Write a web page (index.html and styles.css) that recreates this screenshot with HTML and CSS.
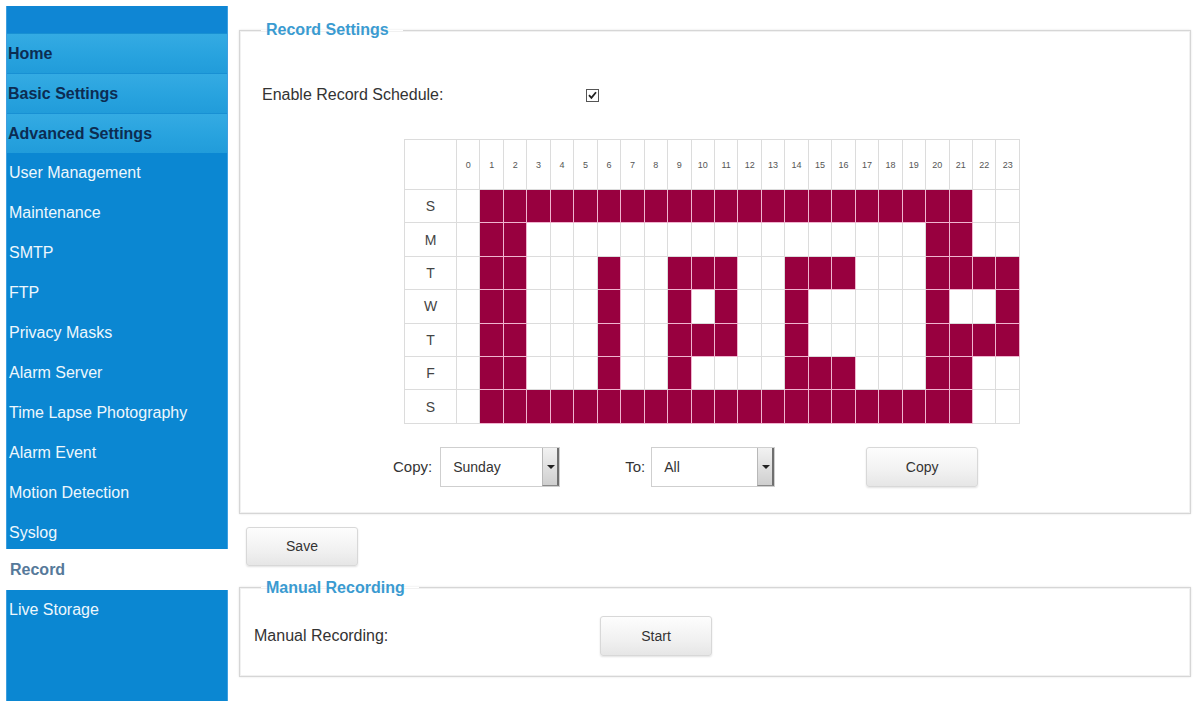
FILE: index.html
```html
<!DOCTYPE html>
<html lang="en">
<head>
  <meta charset="UTF-8" />
  <title>Record</title>
  <link rel="stylesheet" href="styles.css">
</head>
<body>
  <div class="page">
    <div class="sidebar">
      <div class="nav-block">
        <div class="nav-head"></div>
        <div class="nav-group">Home</div>
        <div class="nav-group">Basic Settings</div>
        <div class="nav-group">Advanced Settings</div>
        <div class="nav-item">User Management</div>
        <div class="nav-item">Maintenance</div>
        <div class="nav-item">SMTP</div>
        <div class="nav-item">FTP</div>
        <div class="nav-item">Privacy Masks</div>
        <div class="nav-item">Alarm Server</div>
        <div class="nav-item">Time Lapse Photography</div>
        <div class="nav-item">Alarm Event</div>
        <div class="nav-item">Motion Detection</div>
        <div class="nav-item last">Syslog</div>
      </div>
      <div class="nav-current">Record</div>
      <div class="nav-block bottom">
        <div class="nav-item">Live Storage</div>
      </div>
    </div>

    <div class="main">
      <fieldset class="box">
        <legend>Record Settings</legend>
        <div class="enable-row">
          <span class="label">Enable Record Schedule:</span>
          <span class="check">
            <svg width="13" height="13" viewBox="0 0 13 13">
              <rect x="0.5" y="0.5" width="12" height="12" fill="#fff" stroke="#555"/>
              <path d="M3 6.2 L5.4 8.8 L10 3.2" fill="none" stroke="#222" stroke-width="1.8"/>
            </svg>
          </span>
        </div>

        <table class="schedule">
          <thead>
            <tr id="hourRow"><th class="day-col"></th></tr>
          </thead>
          <tbody id="scheduleBody"></tbody>
        </table>

        <div class="copy-row">
          <span class="copy-label">Copy:</span>
          <div class="combo from"><span>Sunday</span><span class="arrow"></span></div>
          <span class="copy-label to-label">To:</span>
          <div class="combo to"><span>All</span><span class="arrow"></span></div>
          <button class="btn copy-btn">Copy</button>
        </div>
      </fieldset>

      <button class="btn save-btn">Save</button>

      <fieldset class="box manual">
        <legend>Manual Recording</legend>
        <div class="manual-row">
          <span class="label">Manual Recording:</span>
          <button class="btn">Start</button>
        </div>
      </fieldset>
    </div>
  </div>

  <script>
    // hours switched on for each day, Sunday first
    const week = [
      { day: "S", on: range(1, 21) },
      { day: "M", on: [1, 2, 20, 21] },
      { day: "T", on: [1, 2, 6, 9, 10, 11, 14, 15, 16, 20, 21, 22, 23] },
      { day: "W", on: [1, 2, 6, 9, 11, 14, 20, 23] },
      { day: "T", on: [1, 2, 6, 9, 10, 11, 14, 20, 21, 22, 23] },
      { day: "F", on: [1, 2, 6, 9, 14, 15, 16, 20, 21] },
      { day: "S", on: range(1, 21) }
    ];

    function range(a, b) {
      const list = [];
      for (let i = a; i <= b; i++) list.push(i);
      return list;
    }

    function buildSchedule() {
      const head = document.getElementById("hourRow");
      for (let h = 0; h < 24; h++) {
        const th = document.createElement("th");
        th.textContent = h;
        head.appendChild(th);
      }

      const body = document.getElementById("scheduleBody");
      week.forEach(d => {
        const tr = document.createElement("tr");
        let html = `<td class="day">${d.day}</td>`;
        for (let h = 0; h < 24; h++) {
          html += d.on.includes(h) ? '<td class="on"></td>' : '<td></td>';
        }
        tr.innerHTML = html;
        body.appendChild(tr);
      });
    }

    buildSchedule();
  </script>
</body>
</html>
```

FILE: styles.css
```css
body {
  margin: 0;
  font-family: "Liberation Sans", Arial, sans-serif;
  background: #fff;
  color: #333;
}
.page {
  display: flex;
  align-items: flex-start;
  padding: 6px 2px 0 6px;
}

/* left menu */
.sidebar {
  width: 222px;
  flex: none;
}
.nav-block {
  background: #0b87d2;
  border-left: 1px solid #3e9fe0;
  border-right: 1px solid #3e9fe0;
}
.nav-head {
  height: 27px;
  background: #0f86d4;
}
.nav-group {
  height: 39px;
  line-height: 39px;
  border-top: 1px solid #1890d3;
  padding-left: 1px;
  font-size: 16px;
  font-weight: bold;
  color: #0c2c52;
  background: linear-gradient(180deg, #34abe3 0%, #27a2de 60%, #219cda 100%);
}
.nav-group:first-of-type {
  height: 38px;
  line-height: 38px;
}
.nav-item {
  height: 40px;
  line-height: 40px;
  padding-left: 2px;
  font-size: 16px;
  color: #eef7fd;
}
.nav-item.last {
  height: 36px;
}
.nav-current {
  height: 41px;
  line-height: 41px;
  padding-left: 4px;
  font-size: 16px;
  font-weight: bold;
  color: #56799a;
}
.nav-block.bottom {
  min-height: 112px;
}

/* content */
.main {
  flex: 1;
  margin-left: 11px;
}
.box {
  margin: 14px 0 0;
  padding: 0 22px 26px;
  border: 1px solid #d6d6d6;
  box-shadow: inset 0 0 0 1px #f1f1f1, 0 0 2px #e4e4e4;
  min-width: 0;
}
.box legend {
  margin-left: -1px;
  padding: 0 14px 0 5px;
  font-size: 16px;
  line-height: 20px;
  font-weight: bold;
  color: #3a9bd1;
}
.label {
  font-size: 16px;
  color: #333;
}
.enable-row {
  display: flex;
  align-items: center;
  height: 40px;
  margin-top: 35px;
}
.enable-row .label {
  width: 324px;
}
.check {
  display: flex;
}

/* schedule grid */
.schedule {
  margin: 24px 0 0 142px;
  width: 616px;
  table-layout: fixed;
  border-collapse: collapse;
}
.schedule th,
.schedule td {
  border: 1px solid #dcdcdc;
  padding: 0;
}
.schedule th {
  height: 49px;
  font-size: 9px;
  font-weight: normal;
  color: #555;
  text-align: center;
}
.schedule th.day-col {
  width: 51px;
}
.schedule td {
  height: 32.4px;
}
.schedule td.day {
  font-size: 14px;
  color: #444;
  text-align: center;
}
.schedule td.on {
  background: #98003f;
  border-color: #f0b4cf;
}

/* copy controls */
.copy-row {
  display: flex;
  align-items: center;
  height: 40px;
  margin: 23px 0 0 131px;
}
.copy-label {
  font-size: 15px;
  color: #333;
  margin-right: 8px;
}
.to-label {
  margin-left: 65px;
  margin-right: 6px;
}
.combo {
  display: flex;
  align-items: center;
  justify-content: space-between;
  height: 38px;
  border: 1px solid #cfcfcf;
  background: #fff;
  font-size: 14px;
  color: #333;
}
.combo span:first-child {
  padding-left: 12px;
}
.combo.from {
  width: 118px;
}
.combo.to {
  width: 122px;
}
.combo .arrow {
  position: relative;
  width: 17px;
  height: 38px;
  background: linear-gradient(180deg, #f2f2f2, #cfcfcf);
  border-left: 1px solid #b8b8b8;
  border-right: 2px solid #6f6f6f;
  border-bottom: 1px solid #8a8a8a;
  box-sizing: border-box;
}
.combo .arrow::after {
  content: "";
  position: absolute;
  left: 4px;
  top: 17px;
  border-left: 4px solid transparent;
  border-right: 4px solid transparent;
  border-top: 4px solid #222;
}

/* buttons */
.btn {
  width: 112px;
  height: 40px;
  font-family: "Liberation Sans", Arial, sans-serif;
  font-size: 14px;
  color: #333;
  background: linear-gradient(180deg, #fdfdfd 0%, #f1f1f1 60%, #e6e6e6 100%);
  border: 1px solid #d8d8d8;
  border-radius: 3px;
  box-shadow: 0 1px 2px rgba(0, 0, 0, 0.12);
  cursor: pointer;
}
.copy-btn {
  margin-left: 91px;
}
.save-btn {
  display: block;
  height: 39px;
  margin: 13px 0 0 7px;
}

/* manual recording */
.box.manual {
  margin-top: 12px;
  padding: 0 14px 20px;
}
.box.manual legend {
  margin-left: 7px;
}
.manual-row {
  display: flex;
  align-items: center;
  height: 40px;
  margin-top: 18px;
}
.manual-row .label {
  width: 346px;
}
```
